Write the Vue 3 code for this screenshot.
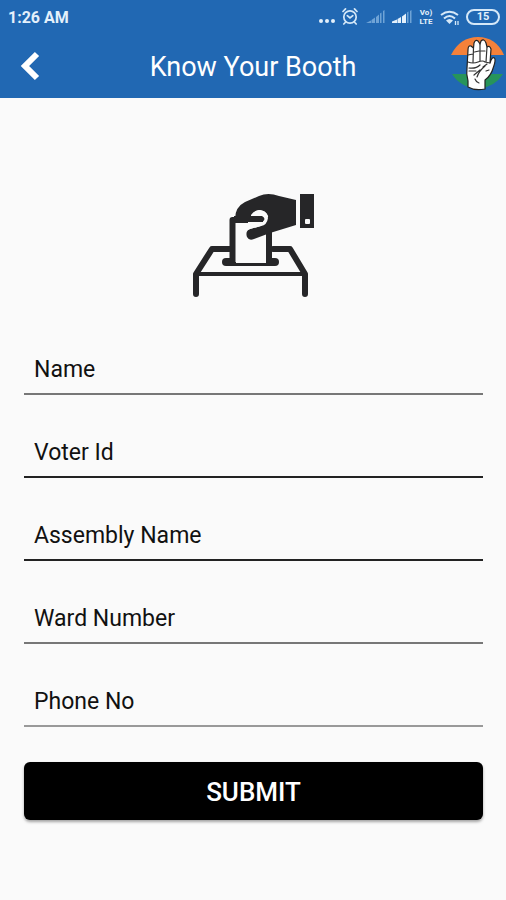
<template>
  <div class="screen">
    <header class="top">
      <div class="status-bar">
        <span class="time">1:26 AM</span>
        <div class="status-icons">
          <svg width="18" height="20" viewBox="0 0 18 20" fill="#e4f0fb">
            <circle cx="3" cy="14" r="2" />
            <circle cx="9" cy="14" r="2" />
            <circle cx="15" cy="14" r="2" />
          </svg>
          <svg width="18" height="20" viewBox="0 0 18 20" fill="none" stroke="#d5e8f8" stroke-width="1.7" stroke-linecap="round">
            <circle cx="8" cy="10" r="6.2" />
            <path d="M1 4.500 3.500 1.800M15 4.500 12.500 1.800M3.200 15.500 1.800 17M12.800 15.500 14.200 17M5.300 8.700 8 11 10.800 8.700" />
          </svg>
          <svg width="20" height="20" viewBox="0 0 20 20" fill="#6fa3d6">
            <path d="M0 16 5 13.500V16ZM5.500 13 9 10.500V16H5.500ZM10 10 13 7.500V16H10ZM14 6.500 15.500 5.500V16H14ZM17 4 18.500 3V16H17Z" />
          </svg>
          <svg width="20" height="20" viewBox="0 0 20 20">
            <path fill="#e4f0fb" d="M0 16V14.500L5 12.500V16ZM5.500 12 9 10V16H5.500ZM10 9.500 14 6.500V16H10Z" />
            <path fill="#6fa3d6" d="M15 5.500 16.500 4.500V16H15ZM18 4 19.500 3V16H18Z" />
          </svg>
          <span class="volte">Vo)<br>LTE</span>
          <svg width="20" height="20" viewBox="0 0 20 20" fill="none" stroke="#d5e8f8" stroke-width="2">
            <path d="M1 8Q9.500 1.500 18 8" />
            <path d="M4 11.500Q9.500 6.500 15 11.500" />
            <path d="M6 13.500Q9.500 10.500 13 13.500L9.500 17Z" fill="#d5e8f8" stroke="none" />
            <path d="M15.500 14V18M18 14V18" stroke-width="1.300" />
          </svg>
          <span class="battery"><span class="level">15</span></span>
        </div>
      </div>
      <div class="app-bar">
        <button class="back" type="button" aria-label="Back">
          <svg width="20" height="30" viewBox="0 0 20 30" fill="none" stroke="#fff" stroke-width="6">
            <path d="M17 3 5 15 17 27" />
          </svg>
        </button>
        <h1>Know Your Booth</h1>
        <svg class="logo" width="56" height="56" viewBox="0 0 56 56">
          <path fill="#f4813a" d="M1 19Q10 1 28 1T54 19Z" />
          <path fill="#27945a" d="M2 38H53Q45 51 28 53Q10 51 2 38Z" />
          <path fill="#fff" stroke="#222" stroke-width="1.200" stroke-linejoin="round" d="M18 51 18 45Q16 38 17 32L18 14Q18 9 21 10L23.500 12 24 7Q25.500 3 28 5L30 8 31 5Q34 2 36 7L37 11Q39.500 9 41 13L40 27Q42 20 44.500 22Q46 24 43.500 31Q41 40 35 44L35 53Q25 55 18 51Z" />
          <path fill="none" stroke="#333" stroke-width="1.200" stroke-linecap="round" d="M23.500 12 23 26M30 8V25M37 11 36 26M18 19 23 18M24.500 16 29 15M31 15 35 15M18 26Q23 28 28 26T35 26L40 27M19 32Q26 33 30 29M19 35 26 35M35 30Q29 35 27 41M33 31 37 28M24 39 30 34M25 43Q26 46 29 47M36 35 39 34" />
        </svg>
      </div>
    </header>

    <main>
      <svg class="hero" width="128" height="106" viewBox="0 0 128 106" fill="none" stroke="#262628" stroke-linejoin="round" stroke-linecap="round">
        <path stroke-width="6" d="M6 101V81L22 56H42M83 56H100L115 81V101" />
        <path stroke-width="4" stroke-linecap="butt" d="M8 81H114" />
        <path stroke-width="8" d="M36 69H85" />
        <path stroke-width="6" fill="#fafafa" stroke-linecap="butt" d="M42.500 69V27H79V69" />
        <path fill="#fafafa" stroke="none" d="M46 30H76V70H46Z" />
        <path fill="#262628" stroke="none" d="M45 26Q45 14 55 9L69 3Q78 -1 89 3L106 7V32L80 40 64 46Q59 48 57 44Q55 38 60 36L71 33Q79 29 78 23Q76 17 69 17Q64 18 62 22V26Z" />
        <path fill="#fafafa" stroke="none" d="M61 22Q64 17 70 17Q78 19 78 25Q77 32 71 33L60 36 58 37V29H73V23H61Z" />
        <path fill="#262628" stroke="none" d="M44 23H72Q77 26 72 29H44Z" />
        <rect x="110" y="1" width="14" height="34" fill="#262628" stroke="none" />
        <rect x="115" y="26" width="5" height="5" rx="1" fill="#fafafa" stroke="none" />
      </svg>

      <form @submit.prevent>
        <input
          v-for="field in fields"
          :key="field.key"
          v-model="form[field.key]"
          :class="['field', field.line]"
          :type="field.type"
          :name="field.key"
          :placeholder="field.label"
          :aria-label="field.label"
        >
        <button class="submit" type="submit">SUBMIT</button>
      </form>
    </main>
  </div>
</template>

<script setup>
import { reactive } from 'vue';

const fields = [
  { key: 'name', label: 'Name', type: 'text', line: 'medium' },
  { key: 'voterId', label: 'Voter Id', type: 'text', line: 'dark' },
  { key: 'assembly', label: 'Assembly Name', type: 'text', line: 'dark' },
  { key: 'ward', label: 'Ward Number', type: 'text', line: 'medium' },
  { key: 'phone', label: 'Phone No', type: 'tel', line: 'light' }
];

const form = reactive({
  name: '',
  voterId: '',
  assembly: '',
  ward: '',
  phone: ''
});
</script>

<style>
body {
  background: #fafafa;
}
</style>

<style scoped>
.screen {
  min-height: 100vh;
  background: #fafafa;
  font-family: Roboto, "Liberation Sans", sans-serif;
}

.top {
  background: #2168b3;
  color: #fff;
}

.status-bar {
  display: flex;
  align-items: center;
  justify-content: space-between;
  height: 34px;
  padding: 0 6px 0 8px;
}

.time {
  font-size: 16px;
  font-weight: 700;
  color: #e4f0fb;
}

.status-icons {
  display: flex;
  align-items: center;
  gap: 6px;
}

.volte {
  width: 16px;
  font-size: 8px;
  font-weight: 700;
  line-height: 9px;
  text-align: center;
  color: #e4f0fb;
}

.battery {
  box-sizing: border-box;
  display: flex;
  justify-content: center;
  align-items: center;
  width: 34px;
  height: 16px;
  border: 2px solid #d5e8f8;
  border-radius: 8px;
}

.level {
  font-size: 11px;
  font-weight: 700;
  line-height: 12px;
  color: #e4f0fb;
}

.app-bar {
  display: grid;
  grid-template-columns: 56px 1fr 56px;
  align-items: center;
  height: 64px;
}

.back {
  display: flex;
  width: 56px;
  padding: 0 0 0 20px;
  border: none;
  background: none;
  cursor: pointer;
}

.logo {
  align-self: start;
  margin-top: 2px;
}

h1 {
  margin: 0;
  padding-top: 2px;
  font-size: 27px;
  font-weight: 400;
  text-align: center;
}

main {
  display: flex;
  flex-direction: column;
  padding: 95px 23px 48px 24px;
}

.hero {
  align-self: center;
  margin-bottom: 42px;
}

form {
  display: flex;
  flex-direction: column;
  gap: 29px;
}

.field {
  box-sizing: border-box;
  width: 100%;
  height: 54px;
  padding: 4px 10px 0;
  border: none;
  border-bottom: 2px solid #777;
  border-radius: 0;
  background: none;
  font-family: inherit;
  font-size: 23px;
  color: #111;
}

.field::placeholder {
  color: #111;
  opacity: 1;
}

.field:focus {
  outline: none;
}

.field.dark {
  border-bottom-color: #222;
}

.field.light {
  border-bottom-color: #999;
}

.submit {
  height: 58px;
  margin-top: 6px;
  padding: 2px 0 0;
  border: none;
  border-radius: 6px;
  background: #000;
  box-shadow: 0 2px 3px rgba(0, 0, 0, .35);
  font-family: inherit;
  font-size: 26px;
  font-weight: 500;
  color: #fff;
  cursor: pointer;
}
</style>
